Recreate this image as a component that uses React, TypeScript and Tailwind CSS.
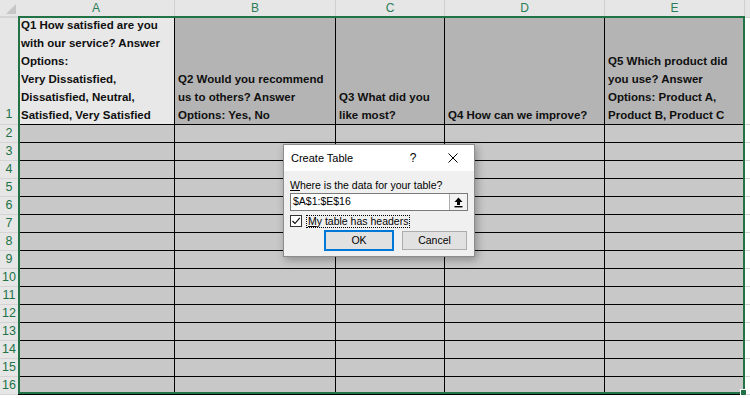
import React from 'react';

const cols = [
  { key: 'A', w: 'w-[157px]', bg: 'bg-[#e8e8e8]', lines: ['Q1 How satisfied are you', 'with our service? Answer', 'Options:', 'Very Dissatisfied,', 'Dissatisfied, Neutral,', 'Satisfied, Very Satisfied'] },
  { key: 'B', w: 'w-[161px]', bg: 'bg-[#b4b4b4]', lines: ['Q2 Would you recommend', 'us to others? Answer', 'Options: Yes, No'] },
  { key: 'C', w: 'w-[109px]', bg: 'bg-[#b4b4b4]', lines: ['Q3 What did you', 'like most?'] },
  { key: 'D', w: 'w-[160px]', bg: 'bg-[#b4b4b4]', lines: ['Q4 How can we improve?'] },
  { key: 'E', w: 'w-[140px]', bg: 'bg-[#b4b4b4]', lines: ['Q5 Which product did', 'you use? Answer', 'Options: Product A,', 'Product B, Product C'] },
];

const dataRows = [2, 3, 4, 5, 6, 7, 8, 9, 10, 11, 12, 13, 14, 15, 16];

const RowHeader = ({ n, tall }: { n: number; tall?: boolean }) => (
  <div
    className={`w-[18px] shrink-0 bg-[#e6e6e6] border-b border-[#d4d4d4] flex justify-center text-[12.5px] text-[#217346] ${
      tall ? 'items-end' : 'items-center'
    }`}
  >
    {n}
  </div>
);

const CreateTableDialog = () => (
  <div className="absolute left-[283px] top-[144px] w-[192px] h-[113px] bg-[#f0f0f0] border border-[#8c8c8c] shadow-[2px_3px_8px_rgba(0,0,0,0.3)] font-['Liberation_Sans',Arial,sans-serif] text-[10.5px] text-black">
    <div className="h-[26px] bg-white flex items-center pl-[7px]">
      <span className="flex-1 text-[11px]">Create Table</span>
      <span className="w-[20px] mr-[9px] text-center text-[12px]">?</span>
      <span className="w-[42px] flex justify-center">
        <svg width="10" height="10" viewBox="0 0 10 10">
          <path d="M0.5 0.5 L9.5 9.5 M9.5 0.5 L0.5 9.5" stroke="#000" strokeWidth="1" />
        </svg>
      </span>
    </div>
    <div className="px-[6px] flex flex-col">
      <div className="mt-[7px] leading-[14px]">
        <span className="underline">W</span>here is the data for your table?
      </div>
      <div className="mt-[1px] h-[18px] flex bg-white border border-[#7a7a7a]">
        <div className="flex-1 flex items-center pl-[2px]">$A$1:$E$16</div>
        <div className="w-[18px] border-l border-[#adadad] bg-[#f3f3f3] flex items-center justify-center">
          <svg width="9" height="11" viewBox="0 0 9 11">
            <path d="M4.5 0.5 L8.5 5 L6 5 L6 8 L3 8 L3 5 L0.5 5 Z" fill="#000" />
            <rect x="0.5" y="9" width="8" height="1.4" fill="#000" />
          </svg>
        </div>
      </div>
      <div className="mt-[4px] h-[12px] flex items-center gap-[4px]">
        <div className="w-[12px] h-[12px] bg-white border border-[#333] flex items-center justify-center">
          <svg width="10" height="10" viewBox="0 0 10 10">
            <path d="M1.5 5 L4 7.5 L8.8 1.8" stroke="#000" strokeWidth="1.1" fill="none" />
          </svg>
        </div>
        <div className="h-[13px] px-[1px] border border-dotted border-black flex items-center leading-none">
          <span className="underline">M</span>y table has headers
        </div>
      </div>
      <div className="mt-[3px] flex justify-end items-center gap-[8px] pr-[1px]">
        <div className="w-[70px] h-[21px] border-2 border-[#0078d7] bg-[#e1e1e1] flex items-center justify-center">
          OK
        </div>
        <div className="w-[65px] h-[19px] border border-[#adadad] bg-[#e1e1e1] flex items-center justify-center">
          Cancel
        </div>
      </div>
    </div>
  </div>
);

export default function App() {
  return (
    <div className="relative w-[750px] h-[398px] bg-white overflow-hidden font-['Liberation_Sans',Arial,sans-serif]">
      {/* column headers */}
      <div className="flex h-[18px]">
        <div className="w-[18px] shrink-0 bg-[#e6e6e6] border-b-2 border-[#d4d4d4] flex items-end justify-end p-[2px]">
          <svg width="10" height="10" viewBox="0 0 10 10">
            <path d="M10 0 L10 10 L0 10 Z" fill="#c6c6c6" />
          </svg>
        </div>
        {cols.map((c) => (
          <div
            key={c.key}
            className={`${c.w} shrink-0 bg-[#e6e6e6] border-r border-[#d0d0d0] border-b-2 border-b-[#217346] flex items-center justify-center text-[12px] text-[#2a7d57]`}
          >
            {c.key}
          </div>
        ))}
        <div className="flex-1 bg-[#e6e6e6] border-b border-[#d0d0d0]" />
      </div>

      {/* row 1 */}
      <div className="flex h-[107px]">
        <RowHeader n={1} tall />
        {cols.map((c) => (
          <div
            key={c.key}
            className={`${c.w} shrink-0 ${c.bg} border-r border-b border-black flex flex-col justify-end pl-[3px] overflow-hidden`}
          >
            {c.lines.map((l) => (
              <div key={l} className="whitespace-nowrap text-[11.5px] leading-[18px] font-bold text-[#0f0f0f]">
                {l}
              </div>
            ))}
          </div>
        ))}
        <div className="flex-1 border-b border-[#d4d4d4]" />
      </div>

      {/* rows 2-16 */}
      {dataRows.map((n) => (
        <div key={n} className="flex h-[18px]">
          <RowHeader n={n} />
          {cols.map((c) => (
            <div key={c.key} className={`${c.w} shrink-0 bg-[#c8c8c8] border-r border-b border-black`} />
          ))}
          <div className="flex-1 border-b border-[#d4d4d4]" />
        </div>
      ))}

      {/* selection */}
      <div className="absolute left-[18px] top-[16px] w-[727px] h-[378px] border-2 border-[#217346]" />
      <div className="absolute left-[740px] top-[389px] w-[7px] h-[7px] bg-[#217346] border border-white" />

      <CreateTableDialog />
    </div>
  );
}
